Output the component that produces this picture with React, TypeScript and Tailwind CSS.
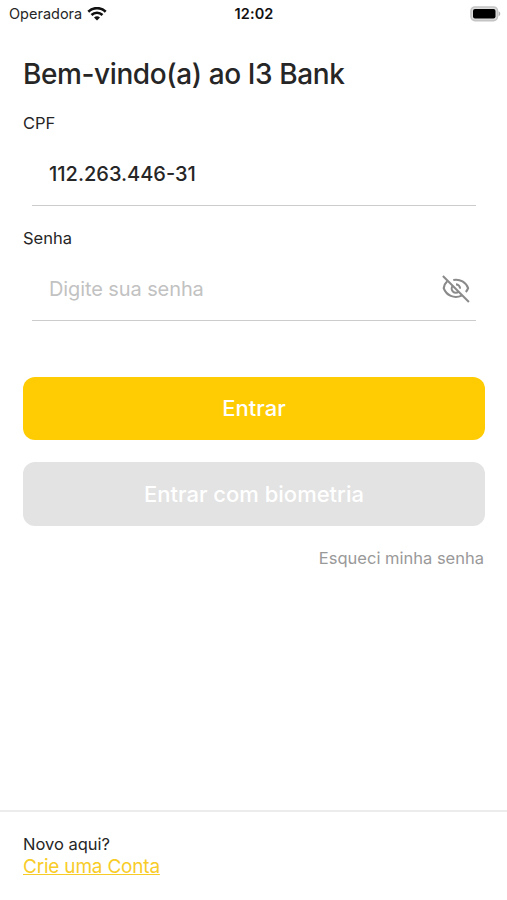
const WifiIcon = () => (
  <svg width="20" height="14" viewBox="0 0 20 14" fill="none" stroke="#111" strokeWidth="2.6">
    <path d="M1.3 4.7a12.4 12.4 0 0 1 17.4 0" />
    <path d="M4.5 8a7.9 7.9 0 0 1 11 0" />
    <path d="M10 13.6 7 10.6a4.4 4.4 0 0 1 6 0Z" fill="#111" stroke="none" />
  </svg>
);

const BatteryIcon = () => (
  <svg width="31" height="16" viewBox="0 0 31 16">
    <rect x="1" y="1" width="26.5" height="13.6" rx="4" fill="#ddd" stroke="#c4c4c4" strokeWidth="1.6" />
    <rect x="3" y="3" width="22.5" height="9.6" rx="2" fill="#000" />
    <path d="M28.6 5.3c2.2.8 2.2 4.2 0 5Z" fill="#b0b0b0" />
  </svg>
);

const EyeOffIcon = () => (
  <svg width="28" height="28" viewBox="0 0 28 28" fill="none" stroke="#8a8a8a" strokeWidth="2.1">
    <path d="M.9 .9 26.9 26.9" />
    <path d="M11.3 5C18 3.6 24.2 7.4 26.1 13.2c-.5 1.5-1.2 2.7-2.3 3.8" />
    <path d="M5.2 6.2C3.5 7.7 2.2 10.4 1.7 13.2c2.5 7.2 10.4 10.8 18 7.4" />
    <path d="M10.9 10.7a4 4 0 0 0 5.8 5.8" />
    <path d="M14 9.4a3.9 3.9 0 0 1 4 4.2" />
  </svg>
);

const App = () => {
  return (
    <main className="flex h-[900px] w-[507px] flex-col bg-white font-['Inter',sans-serif] text-[#262626]">
      <header className="flex h-7 shrink-0 items-center pl-[9px] pr-[6px]">
        <div className="flex flex-1 items-center gap-[5px]">
          <span className="text-[14.5px]">Operadora</span>
          <WifiIcon />
        </div>
        <span className="mr-[2px] text-[14.5px] font-semibold tracking-[0.1px] text-[#111]">12:02</span>
        <div className="flex flex-1 justify-end">
          <BatteryIcon />
        </div>
      </header>

      <section className="flex flex-1 flex-col pl-[23px] pr-[22px] pt-7">
        <h1 className="text-[28px] leading-9 font-medium tracking-[-0.4px]">Bem-vindo(a) ao I3 Bank</h1>

        <label className="mt-[19px] text-[16.5px] leading-6">CPF</label>
        <div className="ml-[9px] mr-[9px] mt-px flex h-[70px] items-center border-b border-[#ccc] px-[17px] pt-[7px]">
          <span className="text-[20px] font-medium">112.263.446-31</span>
        </div>

        <label className="mt-5 text-[16.5px] leading-6">Senha</label>
        <div className="ml-[9px] mr-[9px] flex h-[71px] items-center justify-between border-b border-[#ccc] pl-[17px] pr-[6px] pt-[8px]">
          <span className="text-[20px] tracking-[-0.1px] text-[#c2c2c2]">Digite sua senha</span>
          <EyeOffIcon />
        </div>

        <button className="mt-14 h-[63px] rounded-xl bg-[#ffcc04] text-[22px] font-medium text-white">
          Entrar
        </button>
        <button className="mt-[22px] h-[64px] rounded-xl bg-[#e3e3e3] text-[22px] font-medium text-white">
          Entrar com biometria
        </button>
        <a className="mt-5 mr-px self-end text-[16.5px] leading-6 text-[#999]">Esqueci minha senha</a>
      </section>

      <footer className="flex h-[90px] shrink-0 flex-col items-start border-t-2 border-[#ececec] px-[23px] pt-[21px]">
        <span className="text-[16.5px] leading-[22px]">Novo aqui?</span>
        <a className="text-[19px] leading-[24px] tracking-[-0.2px] text-[#f8cc27] underline">Crie uma Conta</a>
      </footer>
    </main>
  );
};

export default App;
